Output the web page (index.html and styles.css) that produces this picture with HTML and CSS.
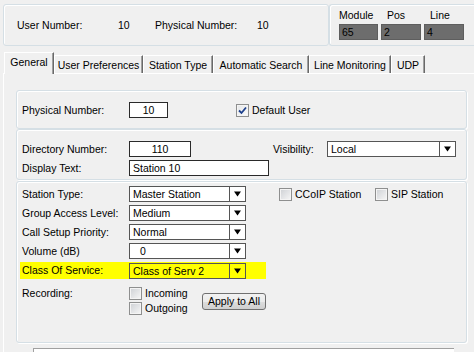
FILE: index.html
```html
<!DOCTYPE html>
<html lang="en">
<head>
    <meta charset="UTF-8">
    <title>Station Settings</title>
    <link rel="stylesheet" href="styles.css">
</head>
<body>
    <div class="header">
        <div class="info">
            <span class="info-label">User Number:</span>
            <span class="info-value">10</span>
            <span class="info-label wide">Physical Number:</span>
            <span>10</span>
        </div>
        <div class="loc">
            <div class="loc-grid">
                <span>Module</span>
                <span class="loc-head">Pos</span>
                <span class="loc-head">Line</span>
                <span class="loc-value">65</span>
                <span class="loc-value">2</span>
                <span class="loc-value">4</span>
            </div>
        </div>
    </div>

    <div class="tabs">
        <div class="tab active t-general">General</div>
        <div class="tab t-prefs">User Preferences</div>
        <div class="tab t-type">Station Type</div>
        <div class="tab t-search">Automatic Search</div>
        <div class="tab t-monitor">Line Monitoring</div>
        <div class="tab t-udp">UDP</div>
    </div>

    <div class="page">
        <div class="group g1">
            <div class="row">
                <span class="label">Physical Number:</span>
                <span class="input w-phys">10</span>
                <span class="opt default-user">
                    <span class="cb checked">
                        <svg width="9" height="9" viewBox="0 0 9 9"><path d="M1 4.5 L3.5 7 L8 1.5" fill="none" stroke="#1d3f8c" stroke-width="1.8"/></svg>
                    </span>
                    Default User
                </span>
            </div>
        </div>

        <div class="group g2">
            <div class="row">
                <span class="label">Directory Number:</span>
                <span class="input w-dir">110</span>
                <span class="vis-label">Visibility:</span>
                <span class="combo w-vis">
                    <span class="combo-text">Local</span>
                    <span class="combo-btn"><svg width="7" height="6" viewBox="0 0 7 6"><polygon points="0,0.5 7,0.5 3.5,5.5" fill="#000"/></svg></span>
                </span>
            </div>
            <div class="row gap">
                <span class="label">Display Text:</span>
                <span class="input left w-text">Station 10</span>
            </div>
        </div>

        <div class="group g3">
            <div class="row">
                <span class="label">Station Type:</span>
                <span class="combo">
                    <span class="combo-text">Master Station</span>
                    <span class="combo-btn"><svg width="7" height="6" viewBox="0 0 7 6"><polygon points="0,0.5 7,0.5 3.5,5.5" fill="#000"/></svg></span>
                </span>
                <span class="opt ccoip"><span class="cb"></span>CCoIP Station</span>
                <span class="opt"><span class="cb"></span>SIP Station</span>
            </div>
            <div class="row">
                <span class="label">Group Access Level:</span>
                <span class="combo">
                    <span class="combo-text">Medium</span>
                    <span class="combo-btn"><svg width="7" height="6" viewBox="0 0 7 6"><polygon points="0,0.5 7,0.5 3.5,5.5" fill="#000"/></svg></span>
                </span>
            </div>
            <div class="row">
                <span class="label">Call Setup Priority:</span>
                <span class="combo">
                    <span class="combo-text">Normal</span>
                    <span class="combo-btn"><svg width="7" height="6" viewBox="0 0 7 6"><polygon points="0,0.5 7,0.5 3.5,5.5" fill="#000"/></svg></span>
                </span>
            </div>
            <div class="row">
                <span class="label">Volume (dB)</span>
                <span class="combo">
                    <span class="combo-text indent">0</span>
                    <span class="combo-btn"><svg width="7" height="6" viewBox="0 0 7 6"><polygon points="0,0.5 7,0.5 3.5,5.5" fill="#000"/></svg></span>
                </span>
            </div>
            <div class="row hl">
                <span class="label">Class Of Service:</span>
                <span class="combo">
                    <span class="combo-text">Class of Serv 2</span>
                    <span class="combo-btn"><svg width="7" height="6" viewBox="0 0 7 6"><polygon points="0,0.5 7,0.5 3.5,5.5" fill="#000"/></svg></span>
                </span>
            </div>
            <div class="rec">
                <span class="label">Recording:</span>
                <div class="rec-opts">
                    <span class="opt"><span class="cb"></span>Incoming</span>
                    <span class="opt"><span class="cb"></span>Outgoing</span>
                </div>
                <button class="btn">Apply to All</button>
            </div>
        </div>

        <div class="list"></div>
    </div>
</body>
</html>
```

FILE: styles.css
```css
body {
    margin: 0;
    width: 474px;
    height: 352px;
    overflow: hidden;
    background-color: #f0f0f0;
    font-family: "Liberation Sans", Arial, sans-serif;
    font-size: 10.5px;
    line-height: 13px;
    color: #000;
}

/* top summary panels */
.header {
    display: flex;
    padding: 4px 0 0 3px;
}
.info {
    box-sizing: border-box;
    flex: none;
    width: 326px;
    height: 42px;
    display: flex;
    align-items: center;
    padding-left: 13px;
    border: 1px solid #d5dfe5;
    border-radius: 3px;
    box-shadow: inset 1px 1px 0 #fff;
}
.info-label {
    width: 101px;
}
.info-label.wide {
    width: 102px;
}
.info-value {
    width: 37px;
}
.loc {
    box-sizing: border-box;
    flex: none;
    width: 160px;
    height: 42px;
    padding: 4px 0 0 9px;
    border: 1px solid #d5dfe5;
    border-right: none;
    border-radius: 3px 0 0 3px;
    box-shadow: inset 1px 1px 0 #fff;
}
.loc-grid {
    display: grid;
    grid-template-columns: 39px 40px 40px;
    column-gap: 3px;
    row-gap: 2px;
}
.loc-head {
    padding-left: 6px;
}
.loc-value {
    box-sizing: border-box;
    height: 16px;
    padding-left: 2px;
    line-height: 14px;
    background-color: #6d6d6d;
    border: 1px solid #5e5e5e;
}

/* tab strip */
.tabs {
    display: flex;
    align-items: flex-end;
    height: 21px;
    margin: 6px 0 0 4px;
}
.tab {
    box-sizing: border-box;
    height: 18px;
    padding-top: 3px;
    text-align: center;
    white-space: nowrap;
    background-color: #f0f0f0;
    border-top: 1px solid #fff;
    border-left: 1px solid #fff;
    border-right: 1px solid #696969;
    box-shadow: inset -1px 0 0 #a0a0a0;
}
.tab.active {
    position: relative;
    z-index: 1;
    height: 22px;
    margin-bottom: -1px;
}
.t-general { width: 50px; }
.t-prefs { width: 89px; }
.t-type { width: 70px; }
.t-search { width: 96px; }
.t-monitor { width: 82px; }
.t-udp { width: 34px; }

.page {
    margin-left: 3px;
    padding: 16px 0 0 12px;
    border-top: 1px solid #fff;
    border-left: 1px solid #fff;
}

/* group boxes */
.group {
    box-sizing: border-box;
    width: 451px;
    padding-left: 5px;
    border: 1px solid #d5dfe5;
    border-radius: 3px;
    box-shadow: inset 1px 1px 0 #fff, 1px 1px 0 #fff;
}
.g1 {
    height: 39px;
    padding-top: 11px;
}
.g2 {
    height: 51px;
    padding-top: 11px;
}
.g3 {
    height: 162px;
    margin-top: 1px;
    padding-top: 4px;
}

.row {
    display: flex;
    align-items: center;
    height: 16px;
}
.row.gap {
    margin-top: 3px;
}
.g3 .row {
    margin-bottom: 3px;
}
.row.hl {
    box-sizing: border-box;
    width: 246px;
    height: 17px;
    margin-left: -2px;
    padding-left: 2px;
    background-color: #ffff00;
}
.label {
    flex: none;
    width: 107px;
}

.input {
    box-sizing: border-box;
    height: 16px;
    line-height: 14px;
    text-align: center;
    background-color: #fff;
    border: 1px solid #2a2a2a;
}
.input.left {
    text-align: left;
    padding-left: 3px;
}
.w-phys { width: 39px; }
.w-dir { width: 62px; }
.w-text { width: 140px; }

.vis-label {
    width: 54px;
    margin-left: 82px;
}

.combo {
    box-sizing: border-box;
    display: flex;
    width: 117px;
    height: 16px;
    background-color: #fff;
    border: 1px solid #555;
}
.hl .combo {
    background-color: #ffff00;
}
.w-vis {
    width: 129px;
}
.combo-text {
    flex: 1;
    padding-left: 3px;
    line-height: 14px;
    white-space: nowrap;
}
.combo-text.indent {
    padding-left: 10px;
}
.combo-btn {
    display: flex;
    align-items: center;
    justify-content: center;
    width: 15px;
    border-left: 1px solid #555;
}

/* checkboxes */
.opt {
    display: flex;
    align-items: center;
    gap: 3px;
}
.cb {
    box-sizing: border-box;
    display: flex;
    align-items: center;
    justify-content: center;
    width: 13px;
    height: 13px;
    border: 1px solid #8e8f8f;
    background: linear-gradient(135deg, #cdd0d4, #f7f7f7);
    box-shadow: inset 0 0 0 1px #f4f4f4;
}
.cb.checked {
    background: linear-gradient(135deg, #e4e6e8, #fbfbfb);
}
.default-user {
    margin-left: 68px;
}
.ccoip {
    width: 96px;
    margin-left: 33px;
}

.rec {
    display: flex;
    align-items: flex-start;
    margin-top: 8px;
}
.rec-opts {
    display: flex;
    flex-direction: column;
    gap: 2px;
    width: 73px;
}
.btn {
    box-sizing: border-box;
    width: 64px;
    height: 17px;
    margin-top: 6px;
    padding: 0;
    font: inherit;
    line-height: 15px;
    color: #000;
    border: 1px solid #707070;
    border-radius: 3px;
    background: linear-gradient(#f2f2f2 0%, #ebebeb 50%, #dddddd 51%, #cfcfcf 100%);
}

.list {
    width: 420px;
    height: 10px;
    margin: 5px 0 0 17px;
    background-color: #fff;
    border-top: 1px solid #a0a0a0;
    border-left: 1px solid #a0a0a0;
}
```
